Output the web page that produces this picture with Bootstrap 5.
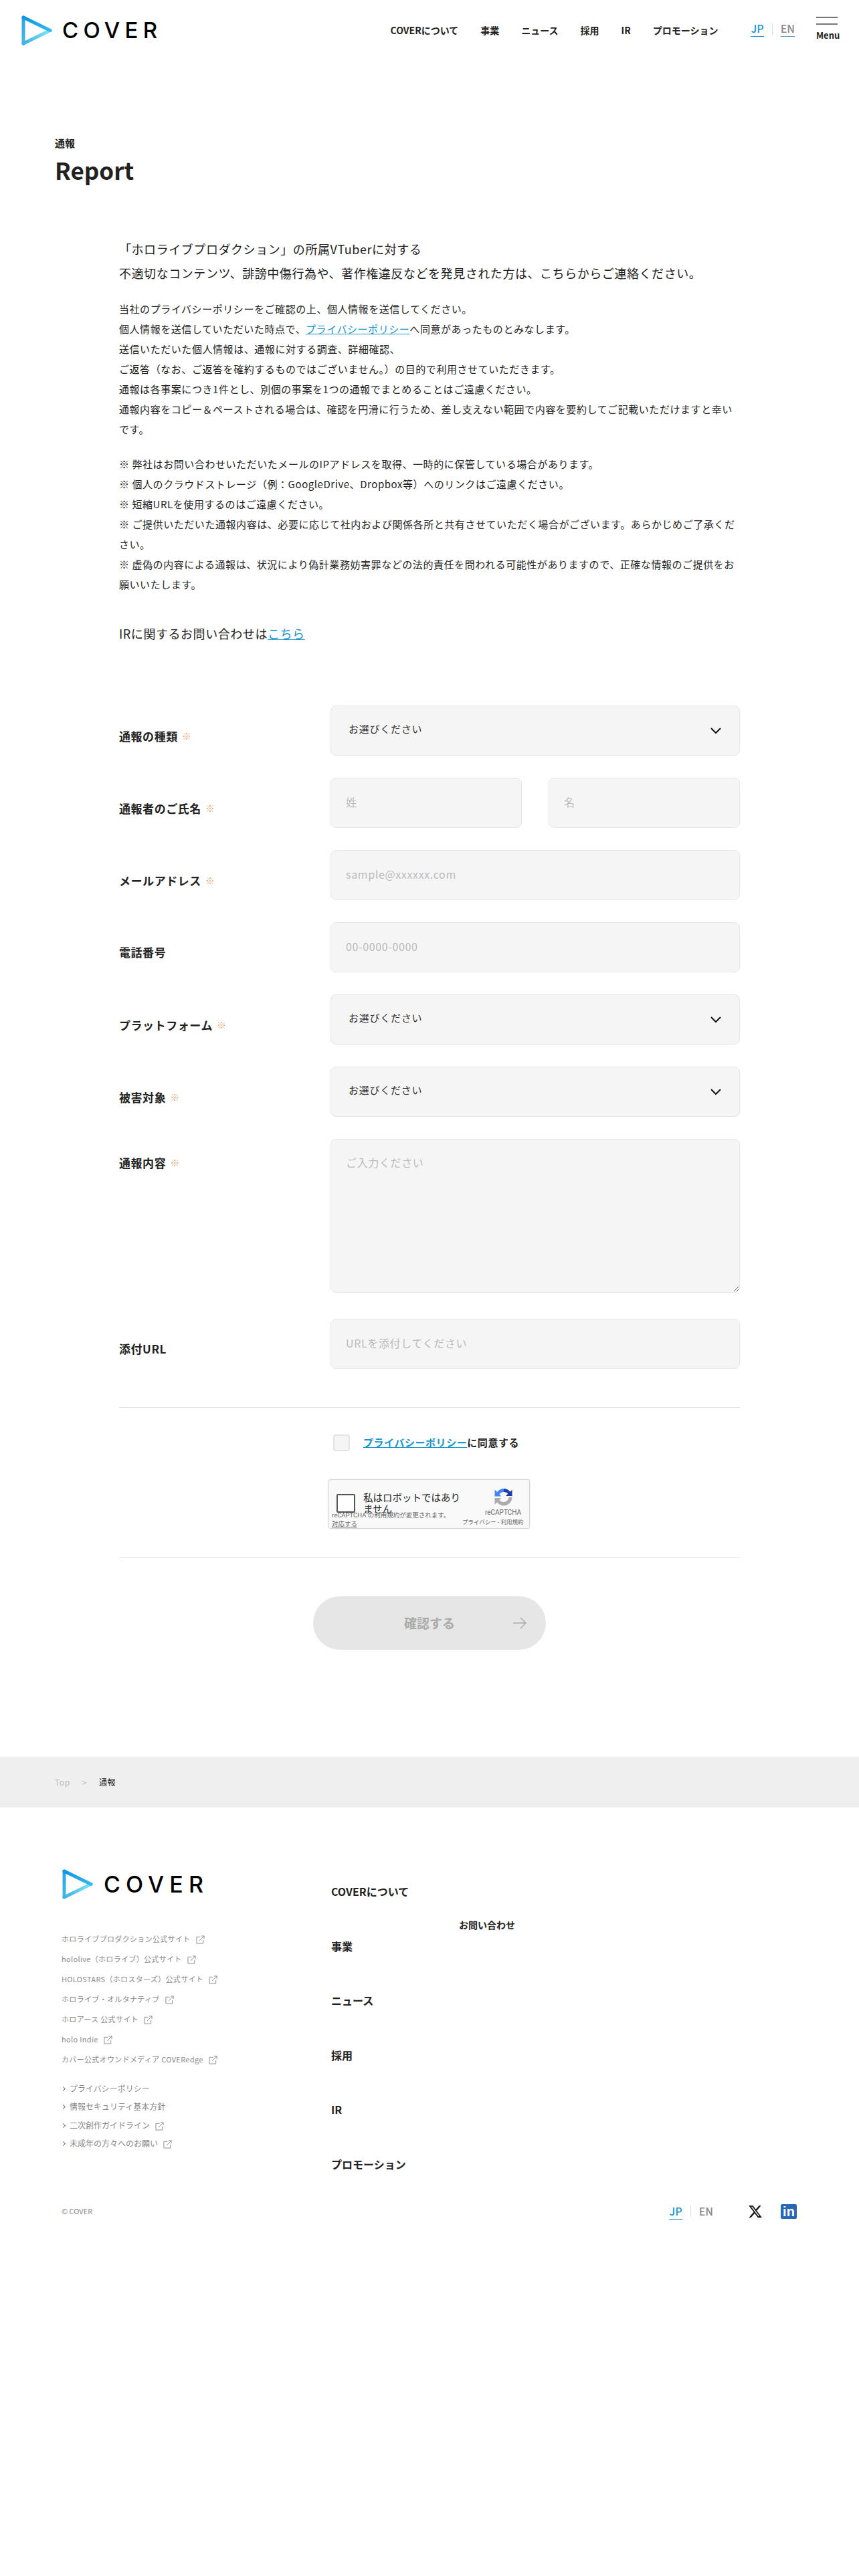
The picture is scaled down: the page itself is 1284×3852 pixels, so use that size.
<!DOCTYPE html>
<html lang="ja">
<head>
    <meta charset="UTF-8">
    <meta name="viewport" content="width=device-width, initial-scale=1.0">
    <title>Report | COVER</title>
    <link rel="stylesheet" href="https://cdn.jsdelivr.net/npm/bootstrap@5.3.0/dist/css/bootstrap.min.css">
    <style>
        body {
            font-family: "Noto Sans CJK JP", "Noto Sans", sans-serif;
            color: #222;
            background: #fff;
            min-height: 3852px;
            letter-spacing: .035em;
        }
        a { color: #1995ce; }

        /* logo */
        .logo-mark { display: block; flex: none; }
        .logo-word {
            font-family: Inter, "Noto Sans", sans-serif;
            font-weight: 500;
            color: #000;
            letter-spacing: .22em;
            line-height: 1;
        }

        /* header */
        .site-head { height: 90px; padding: 0 32px; }
        .head-logo { gap: 15px; }
        .head-logo .logo-word { font-size: 33px; }
        .head-nav { gap: 33px; margin-right: 49px; }
        .head-nav a { color: #222; font-size: 14px; font-weight: 700; text-decoration: none; letter-spacing: 0; }
        .lang-switch { font-size: 16px; font-weight: 500; letter-spacing: 0; }
        .lang-switch a { color: #888; text-decoration: none; line-height: 22px; padding-bottom: 1px; border-bottom: 1px solid #4fa3ad; }
        .lang-switch a.on { color: #1995ce; border-bottom-color: #1995ce; }
        .lang-sep { width: 1px; height: 17px; background: #ddd; margin: 0 12px; }
        .head-lang { margin-top: -4px; }
        .menu-btn { width: 32px; margin-left: 32px; margin-top: -4px; }
        .menu-btn i { display: block; height: 2px; background: #777; margin-bottom: 8px; }
        .menu-btn span { display: block; font-size: 13px; font-weight: 700; line-height: 16px; margin-top: 6px; letter-spacing: 0; }

        /* page title */
        .page-title { width: 1120px; margin: 113px auto 0; }
        .page-title p { font-size: 15px; font-weight: 700; line-height: 22px; margin: 0 0 4px; letter-spacing: 0; }
        .page-title h1 { font-size: 35px; font-weight: 700; line-height: 50px; margin: 0; letter-spacing: 0; }

        /* intro text */
        .report-body { width: 928px; margin: 0 auto; }
        .intro-lead { font-size: 18px; line-height: 36px; margin: 75px 0 21px; }
        .intro-text { font-size: 15px; line-height: 30px; margin: 0 0 22px; }
        .intro-ir { font-size: 18px; line-height: 36px; margin: 40px 0 90px; }

        /* form */
        .form-line { display: flex; margin-bottom: 33px; }
        .form-line.text-line { margin-bottom: 39px; }
        .form-line.url-line { margin-bottom: 57px; }
        .form-name { width: 316px; flex: none; font-size: 17px; font-weight: 700; line-height: 26px; padding-top: 32px; }
        .form-name.name-top { padding-top: 22px; }
        .need-mark { color: #e0a878; font-size: 14px; font-weight: 400; margin-left: 6px; vertical-align: 2px; }
        .field-box { flex: 1; }
        .name-pair { gap: 40px; }
        .report-body .form-control,
        .report-body .form-select {
            height: 75px;
            background-color: #f5f5f5;
            border: 1px solid #e6e6e6;
            border-radius: 8px;
        }
        .report-body .form-control { padding: 0 22px 4px; font-size: 16px; letter-spacing: .04em; }
        .report-body .form-control::placeholder { color: #bbb; }
        .report-body textarea.form-control { height: 230px; padding: 22px; }
        .report-body .form-select {
            padding: 0 48px 4px 26px;
            font-size: 15px;
            letter-spacing: .05em;
            color: #333;
            background-image: url("data:image/svg+xml,%3csvg xmlns='http://www.w3.org/2000/svg' viewBox='0 0 16 10'%3e%3cpath fill='none' stroke='%23111' stroke-width='2' d='M1 1l7 7 7-7'/%3e%3c/svg%3e");
            background-size: 16px 10px;
            background-position: right 27px center;
        }
        .rule-line { border: 0; border-top: 1px solid #ddd; opacity: 1; margin: 0; }
        .agree-line { gap: 20px; margin: 40px 0 42px 320px; font-size: 15px; font-weight: 700; }
        .agree-box { appearance: none; width: 25px; height: 25px; background: #f5f5f5; border: 2px solid #e3e3e3; border-radius: 4px; margin: 0; }
        .captcha-box {
            position: relative;
            width: 301px;
            height: 74px;
            margin: 0 0 43px 313px;
            background: #f9f9f9;
            border: 1px solid #d3d3d3;
            border-radius: 3px;
            box-shadow: 0 0 3px rgba(0, 0, 0, .08);
            font-family: Roboto, "Noto Sans CJK JP", sans-serif;
            letter-spacing: 0;
        }
        .captcha-check { width: 28px; height: 28px; flex: none; background: #fff; border: 2px solid #555; border-radius: 2px; margin: 21px 12px 0 11px; }
        .captcha-text { width: 145px; font-size: 14.5px; line-height: 17px; color: #222; padding-top: 19px; }
        .captcha-brand { margin: 10px 10px 0 auto; width: 90px; text-align: right; color: #666; }
        .captcha-brand svg { display: block; margin: 0 13px 0 auto; }
        .captcha-brand b { display: block; font-weight: 400; font-size: 10px; line-height: 14px; padding-right: 2px; margin-top: 2px; }
        .captcha-brand small { display: block; font-size: 8.5px; line-height: 14px; white-space: nowrap; }
        .captcha-notice { position: absolute; left: 4px; top: 46px; font-size: 9.5px; line-height: 13px; color: #666; }
        .captcha-notice a { color: #666; display: block; }
        .send-btn {
            position: relative;
            display: block;
            width: 348px;
            height: 80px;
            margin: 57px auto 160px;
            border: 0;
            border-radius: 40px;
            background: #e6e6e6;
            color: #aaa;
            font-size: 19px;
            font-weight: 700;
        }
        .send-btn:disabled { background: #e6e6e6; color: #aaa; opacity: 1; }
        .send-btn svg { position: absolute; right: 29px; top: 31px; }

        /* breadcrumb */
        .crumb-band { height: 76px; background: #efefef; padding-left: 82px; }
        .crumb-band .breadcrumb {
            --bs-breadcrumb-divider: ">";
            --bs-breadcrumb-item-padding-x: 18px;
            --bs-breadcrumb-divider-color: #bbb;
            --bs-breadcrumb-item-active-color: #222;
            margin: 0;
            font-size: 12px;
        }
        .crumb-band a { color: #bbb; text-decoration: none; }

        /* footer */
        .foot-wrap { width: 1100px; margin: 0 auto; padding-top: 92px; }
        .foot-left { width: 403px; flex: none; }
        .foot-logo { gap: 15px; }
        .foot-logo .logo-word { font-size: 34px; letter-spacing: .24em; }
        .foot-sites { margin: 49px 0 24px; }
        .foot-sites li { font-size: 11px; line-height: 20px; margin-bottom: 10px; color: #888; letter-spacing: .03em; }
        .foot-sites svg, .foot-rules svg { margin-left: 8px; vertical-align: -3px; }
        .foot-rules li { font-size: 12px; line-height: 20px; margin-bottom: 7.3px; color: #888; letter-spacing: 0; }
        .foot-rules li::before {
            content: "";
            display: inline-block;
            width: 5px;
            height: 5px;
            border-top: 1px solid #777;
            border-right: 1px solid #777;
            transform: rotate(45deg);
            margin: 0 7px 2px 0;
        }
        .foot-mid { width: 191px; flex: none; padding-top: 21px; }
        .foot-mid p { font-size: 16px; font-weight: 700; line-height: 24px; margin: 0 0 57.5px; letter-spacing: 0; }
        .foot-mid p:last-child { margin-bottom: 0; }
        .foot-right { padding-top: 72px; font-size: 14px; font-weight: 700; line-height: 22px; letter-spacing: 0; }
        .foot-base { margin-top: 48px; height: 22px; }
        .foot-copy { font-size: 11px; color: #888; letter-spacing: 0; }
        .foot-lang { margin-left: auto; margin-right: 52px; }
        .foot-x { margin-right: 27px; }
        .foot-in {
            width: 24px;
            height: 22px;
            margin-right: 1px;
            background: #2867b2;
            border-radius: 2px;
            color: #fff;
            font-family: "Liberation Sans", sans-serif;
            font-weight: 700;
            font-size: 20px;
            line-height: 23px;
            text-align: center;
            letter-spacing: 0;
        }
    </style>
</head>
<body>
    <svg width="0" height="0" class="position-absolute">
        <defs>
            <linearGradient id="edgeTop" gradientUnits="userSpaceOnUse" x1="3" y1="3" x2="43" y2="22"><stop offset="0" stop-color="#0d94e4"/><stop offset="1" stop-color="#35b9ec"/></linearGradient>
            <linearGradient id="edgeLeft" gradientUnits="userSpaceOnUse" x1="3" y1="3" x2="3" y2="42"><stop offset="0" stop-color="#2aa5e6"/><stop offset="1" stop-color="#47b9e8"/></linearGradient>
            <linearGradient id="edgeLow" gradientUnits="userSpaceOnUse" x1="3" y1="42" x2="43" y2="22"><stop offset="0" stop-color="#3eb1e4"/><stop offset="1" stop-color="#7fe6f6"/></linearGradient>
            <symbol id="coverMark" viewBox="0 0 46 45">
                <path d="M3 3V42" fill="none" stroke="url(#edgeLeft)" stroke-width="5" stroke-linecap="round"/>
                <path d="M3 42L43 22.500" fill="none" stroke="url(#edgeLow)" stroke-width="5" stroke-linecap="round"/>
                <path d="M3 3L43 22.500" fill="none" stroke="url(#edgeTop)" stroke-width="5" stroke-linecap="round"/>
            </symbol>
            <symbol id="extLink" viewBox="0 0 14 14">
                <path d="M7 2.500H1v10.500h10.500V7.500M5.500 8.500L13 1M8.500 1H13v4.500" fill="none" stroke="#888" stroke-width="1"/>
            </symbol>
        </defs>
    </svg>

    <header class="site-head d-flex align-items-center">
        <a href="#" class="head-logo d-flex align-items-center text-decoration-none">
            <svg class="logo-mark" width="46" height="45"><use href="#coverMark"/></svg>
            <span class="logo-word">COVER</span>
        </a>
        <nav class="head-nav d-flex ms-auto">
            <a href="#">COVERについて</a>
            <a href="#">事業</a>
            <a href="#">ニュース</a>
            <a href="#">採用</a>
            <a href="#">IR</a>
            <a href="#">プロモーション</a>
        </nav>
        <div class="lang-switch head-lang d-flex align-items-center">
            <a href="#" class="on">JP</a>
            <span class="lang-sep"></span>
            <a href="#">EN</a>
        </div>
        <div class="menu-btn">
            <i></i><i></i>
            <span>Menu</span>
        </div>
    </header>

    <div class="page-title">
        <p>通報</p>
        <h1>Report</h1>
    </div>

    <main class="report-body">
        <p class="intro-lead">「ホロライブプロダクション」の所属VTuberに対する<br>不適切なコンテンツ、誹謗中傷行為や、著作権違反などを発見された方は、こちらからご連絡ください。</p>
        <p class="intro-text">当社のプライバシーポリシーをご確認の上、個人情報を送信してください。<br>
            個人情報を送信していただいた時点で、<a href="#">プライバシーポリシー</a>へ同意があったものとみなします。<br>
            送信いただいた個人情報は、通報に対する調査、詳細確認、<br>
            ご返答（なお、ご返答を確約するものではございません。）の目的で利用させていただきます。<br>
            通報は各事案につき1件とし、別個の事案を1つの通報でまとめることはご遠慮ください。<br>
            通報内容をコピー＆ペーストされる場合は、確認を円滑に行うため、差し支えない範囲で内容を要約してご記載いただけますと幸いです。</p>
        <p class="intro-text">※ 弊社はお問い合わせいただいたメールのIPアドレスを取得、一時的に保管している場合があります。<br>
            ※ 個人のクラウドストレージ（例：GoogleDrive、Dropbox等）へのリンクはご遠慮ください。<br>
            ※ 短縮URLを使用するのはご遠慮ください。<br>
            ※ ご提供いただいた通報内容は、必要に応じて社内および関係各所と共有させていただく場合がございます。あらかじめご了承ください。<br>
            ※ 虚偽の内容による通報は、状況により偽計業務妨害罪などの法的責任を問われる可能性がありますので、正確な情報のご提供をお願いいたします。</p>
        <p class="intro-ir">IRに関するお問い合わせは<a href="#">こちら</a></p>

        <form>
            <div class="form-line">
                <label class="form-name">通報の種類<span class="need-mark">※</span></label>
                <div class="field-box"><select class="form-select"><option>お選びください</option></select></div>
            </div>
            <div class="form-line">
                <label class="form-name">通報者のご氏名<span class="need-mark">※</span></label>
                <div class="field-box d-flex name-pair">
                    <input type="text" class="form-control" placeholder="姓">
                    <input type="text" class="form-control" placeholder="名">
                </div>
            </div>
            <div class="form-line">
                <label class="form-name">メールアドレス<span class="need-mark">※</span></label>
                <div class="field-box"><input type="email" class="form-control" placeholder="sample@xxxxxx.com"></div>
            </div>
            <div class="form-line">
                <label class="form-name">電話番号</label>
                <div class="field-box"><input type="text" class="form-control" placeholder="00-0000-0000"></div>
            </div>
            <div class="form-line">
                <label class="form-name">プラットフォーム<span class="need-mark">※</span></label>
                <div class="field-box"><select class="form-select"><option>お選びください</option></select></div>
            </div>
            <div class="form-line">
                <label class="form-name">被害対象<span class="need-mark">※</span></label>
                <div class="field-box"><select class="form-select"><option>お選びください</option></select></div>
            </div>
            <div class="form-line text-line">
                <label class="form-name name-top">通報内容<span class="need-mark">※</span></label>
                <div class="field-box"><textarea class="form-control" placeholder="ご入力ください"></textarea></div>
            </div>
            <div class="form-line url-line">
                <label class="form-name">添付URL</label>
                <div class="field-box"><input type="text" class="form-control" placeholder="URLを添付してください"></div>
            </div>

            <hr class="rule-line">
            <div class="agree-line d-flex align-items-center">
                <input type="checkbox" class="agree-box" aria-label="同意">
                <span><a href="#">プライバシーポリシー</a>に同意する</span>
            </div>
            <div class="captcha-box d-flex">
                <div class="captcha-check"></div>
                <div class="captcha-text">私はロボットではありません</div>
                <div class="captcha-brand">
                    <svg width="30" height="30" viewBox="0 0 30 30">
                        <path d="M15 3a12 12 0 0 1 9.500 4.700l3-3V14H18l3.400-3.400A8 8 0 0 0 15 8z" fill="#1c3aa9"/>
                        <path d="M3 15A12 12 0 0 1 15 3v5a8 8 0 0 0-6.600 3.500l3 3H1.500V4.800l3.300 2.700z" fill="#4285f4"/>
                        <path d="M1.500 17h10l-3.200 3.100A8 8 0 0 0 22.500 15.800h5A12.500 12.500 0 0 1 5.100 23.500l-3.600 3.300z" fill="#ababab"/>
                    </svg>
                    <b>reCAPTCHA</b>
                    <small>プライバシー - 利用規約</small>
                </div>
                <div class="captcha-notice">reCAPTCHA の利用規約が変更されます。<a href="#">対応する</a></div>
            </div>
            <hr class="rule-line">
            <button type="button" class="send-btn" disabled>確認する
                <svg width="20" height="18" viewBox="0 0 20 18"><path d="M0 9h19M11 1l8 8-8 8" fill="none" stroke="#aaa" stroke-width="1.300"/></svg>
            </button>
        </form>
    </main>

    <div class="crumb-band d-flex align-items-center">
        <ol class="breadcrumb">
            <li class="breadcrumb-item"><a href="#">Top</a></li>
            <li class="breadcrumb-item active">通報</li>
        </ol>
    </div>

    <footer class="foot-wrap">
        <div class="d-flex">
            <div class="foot-left">
                <div class="foot-logo d-flex align-items-center">
                    <svg class="logo-mark" width="48" height="45"><use href="#coverMark"/></svg>
                    <span class="logo-word">COVER</span>
                </div>
                <ul class="foot-sites list-unstyled">
                    <li>ホロライブプロダクション公式サイト<svg width="13" height="13"><use href="#extLink"/></svg></li>
                    <li>hololive（ホロライブ）公式サイト<svg width="13" height="13"><use href="#extLink"/></svg></li>
                    <li>HOLOSTARS（ホロスターズ）公式サイト<svg width="13" height="13"><use href="#extLink"/></svg></li>
                    <li>ホロライブ・オルタナティブ<svg width="13" height="13"><use href="#extLink"/></svg></li>
                    <li>ホロアース 公式サイト<svg width="13" height="13"><use href="#extLink"/></svg></li>
                    <li>holo Indie<svg width="13" height="13"><use href="#extLink"/></svg></li>
                    <li>カバー公式オウンドメディア COVERedge<svg width="13" height="13"><use href="#extLink"/></svg></li>
                </ul>
                <ul class="foot-rules list-unstyled mb-0">
                    <li>プライバシーポリシー</li>
                    <li>情報セキュリティ基本方針</li>
                    <li>二次創作ガイドライン<svg width="13" height="13"><use href="#extLink"/></svg></li>
                    <li>未成年の方々へのお願い<svg width="13" height="13"><use href="#extLink"/></svg></li>
                </ul>
            </div>
            <div class="foot-mid">
                <p>COVERについて</p>
                <p>事業</p>
                <p>ニュース</p>
                <p>採用</p>
                <p>IR</p>
                <p>プロモーション</p>
            </div>
            <div class="foot-right">お問い合わせ</div>
        </div>
        <div class="foot-base d-flex align-items-center">
            <span class="foot-copy">© COVER</span>
            <div class="lang-switch foot-lang d-flex align-items-center">
                <a href="#" class="on">JP</a>
                <span class="lang-sep"></span>
                <a href="#" class="border-0">EN</a>
            </div>
            <svg class="foot-x" width="22" height="22" viewBox="0 0 24 24"><path d="M18.244 2.250h3.308l-7.227 8.260 8.502 11.240H16.170l-5.214-6.817L4.990 21.750H1.680l7.730-8.835L1.254 2.250H8.080l4.713 6.231zm-1.161 17.520h1.833L7.084 4.126H5.117z" fill="#111"/></svg>
            <span class="foot-in">in</span>
        </div>
    </footer>
</body>
</html>
